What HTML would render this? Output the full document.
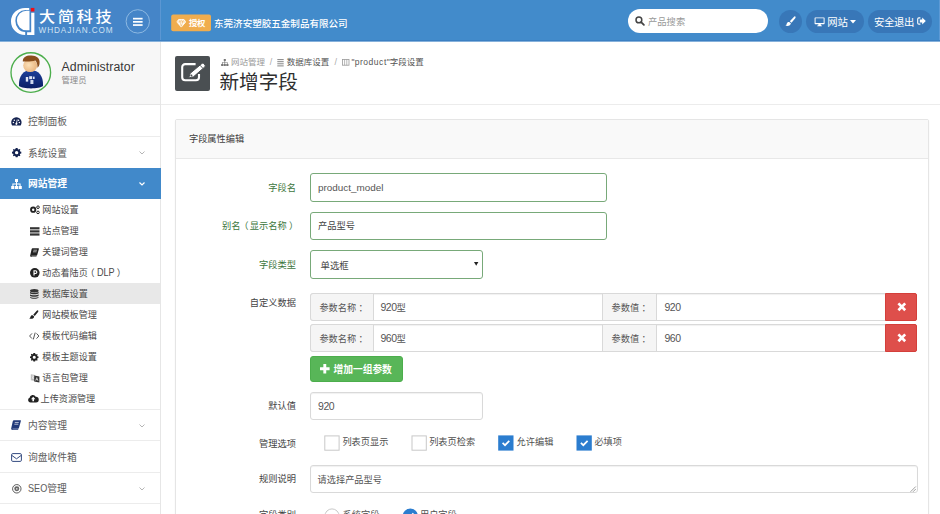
<!DOCTYPE html>
<html lang="zh-CN">
<head>
<meta charset="utf-8">
<title>新增字段</title>
<style>
*{box-sizing:border-box;margin:0;padding:0}
html,body{width:940px;height:514px;overflow:hidden;background:#fff}
body{position:relative;font-family:"Liberation Sans","Noto Sans CJK SC",sans-serif;font-size:9.6px;color:#444}
.a{position:absolute}
.t{position:absolute;line-height:1;white-space:nowrap}
svg{position:absolute;display:block;overflow:visible}
/* header */
#hd{left:0;top:0;width:940px;height:42px;background:#428bcb;border-bottom:1px solid #86b1db;box-shadow:inset 0 -1px 0 #3b7fc2}
#hdl{left:0;top:0;width:161px;height:40px;background:#4585c8;border-right:1px solid #5b97d3}
/* sidebar */
#sb{left:0;top:42px;width:161px;height:472px;background:#fff;border-right:1px solid #e6e6e6}
#user{left:0;top:42px;width:161px;height:63px;background:#f7f7f7;border-bottom:1px solid #e5e5e5;border-right:1px solid #e6e6e6}
.ln{position:absolute;left:0;width:160px;height:1px;background:#ececec}
.m1{font-size:9.75px;color:#5c5c5c;left:28px}
.m2{font-size:9.1px;color:#4a4a4a;left:42px}
/* main */
.lab{position:absolute;line-height:1;white-space:nowrap;font-size:9.25px;color:#444;text-align:right;width:120px;left:176px}
.g{color:#3c763d}
.inp{position:absolute;background:#fff;border:1px solid #d9d9d9;border-radius:3px;height:28px}
.ok{border-color:#78a979}
.ad{position:absolute;background:#f5f5f5;border:1px solid #d9d9d9;height:28px}
.pl{position:relative}
.cb{position:absolute;width:15px;height:15px;border:1px solid #ccc;background:#fff}
.cb.on{background:#2e7dd1;border-color:#2e7dd1}
</style>
</head>
<body>
<!-- HEADER -->
<div class="a" id="hd"></div>
<div class="a" id="hdl"></div>
<div class="a" style="left:939px;top:0;width:1px;height:40px;background:#5d9ad5"></div>
<!-- logo -->
<svg style="left:0;top:0" width="160" height="41" viewBox="0 0 160 41">
  <path d="M29.2,7.9 L25,7.9 A14,13.5 0 0 0 25,34.9 L25.2,34.9 L25.2,32 A10,11 0 0 1 25.5,10 L29.2,10 Z" fill="#fff"/>
  <path d="M29.5,10.7 L29.5,30.3 L26.5,30.3 A9.6,9.8 0 0 1 26.5,10.7 Z" fill="#fff"/>
  <path d="M31.2,12.8 H34.4 V34.9 H27.1 V32.2 H31.2 Z" fill="#fff"/>
  <rect x="30.8" y="7.9" width="3.6" height="3.6" fill="#f20d14"/>
  <circle cx="137.8" cy="21.4" r="11.7" fill="none" stroke="#8db9e2" stroke-width="1"/>
  <rect x="133" y="17.8" width="9.6" height="1.7" fill="#fff"/>
  <rect x="133" y="21" width="9.6" height="1.7" fill="#fff"/>
  <rect x="133" y="24.2" width="9.6" height="1.7" fill="#fff"/>
</svg>
<div class="t" id="lg1" style="left:38.6px;top:9.5px;font-size:14.7px;letter-spacing:2.4px;transform:scaleX(1.1);transform-origin:0 0;color:#fff;font-weight:500">大简科技</div>
<div class="t" id="lg2" style="left:38.6px;top:27.4px;font-size:8.2px;letter-spacing:0.9px;color:#cfe1f3">WHDAJIAN.COM</div>
<!-- badge -->
<svg id="badge" style="left:0;top:0" width="260" height="41" viewBox="0 0 260 41"><rect x="171.2" y="14.6" width="39.8" height="16.7" rx="2" fill="#f0ad4e"/></svg>
<svg style="left:176.4px;top:19.4px" width="10.6" height="8.6" viewBox="0 0 10 9"><path d="M2.2,0.5 H7.8 L9.6,3.1 L5,8.5 L0.4,3.1 Z" fill="#fff" stroke="#fff" stroke-width="0.9" stroke-linejoin="round"/><path d="M0.8,3.1 H9.2 M3.5,3.1 L5,7.6 L6.5,3.1 M2.6,0.9 L3.5,3.1 L5,0.9 L6.5,3.1 L7.4,0.9" fill="none" stroke="#f0ad4e" stroke-width="0.55" stroke-linejoin="round"/></svg>
<div class="t" id="bd1" style="left:189px;top:19.4px;font-size:8.4px;color:#fff;font-weight:bold;letter-spacing:-0.3px">授权</div>
<div class="t" id="co" style="left:214px;top:19px;font-size:9.55px;color:#fff;font-weight:500">东莞济安塑胶五金制品有限公司</div>
<!-- search -->
<div class="a" id="srch" style="left:628px;top:9px;width:140px;height:23.5px;background:#fff;border-radius:12px"></div>
<svg style="left:635px;top:15.5px" width="10" height="10" viewBox="0 0 10 10"><circle cx="3.9" cy="3.9" r="2.9" fill="none" stroke="#444" stroke-width="1.5"/><path d="M6.1,6.1 L8.9,8.9" stroke="#444" stroke-width="1.8" stroke-linecap="round"/></svg>
<div class="t" id="ph" style="left:648px;top:17.5px;font-size:9.3px;color:#999">产品搜索</div>
<!-- right buttons -->
<div class="a" style="left:779px;top:9.8px;width:23.4px;height:23.4px;border-radius:12px;background:#3877b8"></div>
<svg style="left:785px;top:16.2px" width="10.9" height="10.9" viewBox="0 0 12 12"><path d="M11.3,0.5 C11.9,1 11.8,1.7 11.3,2.4 L7.2,7.4 L5.3,5.9 L9.7,1 C10.2,0.4 10.8,0.1 11.3,0.5 Z M4.6,6.6 L6.5,8.1 C6.3,10.3 3.6,11.9 0.3,10.6 C1.6,10 1.7,9.2 2,8.2 C2.4,6.9 3.6,6.3 4.6,6.6 Z" fill="#fff"/></svg>
<div class="a" style="left:806px;top:9.8px;width:58px;height:22.8px;border-radius:12px;background:#3877b8"></div>
<svg style="left:813.5px;top:16.6px" width="11.2" height="9.6" viewBox="0 0 11 10"><path d="M0.9,0.4 H10.1 A0.6,0.6 0 0 1 10.7,1 V6.9 A0.6,0.6 0 0 1 10.1,7.5 H0.9 A0.6,0.6 0 0 1 0.3,6.9 V1 A0.6,0.6 0 0 1 0.9,0.4 Z M1.3,1.4 V6.3 H9.7 V1.4 Z M4.3,7.5 H6.7 L7,8.8 H8 V9.6 H3 V8.8 H4 Z" fill="#fff" fill-rule="evenodd"/></svg>
<div class="t" id="wz" style="left:827.3px;top:17.5px;font-size:10.4px;color:#fff;letter-spacing:-0.3px">网站</div>
<svg style="left:849.5px;top:19.5px" width="6" height="4" viewBox="0 0 6 4"><path d="M0,0 H6 L3,3.4 Z" fill="#fff"/></svg>
<div class="a" style="left:867.7px;top:9.8px;width:64.6px;height:22.8px;border-radius:12px;background:#3877b8"></div>
<div class="t" id="tc" style="left:874px;top:17.7px;font-size:10.4px;color:#fff;letter-spacing:-0.4px">安全退出</div>
<svg style="left:916.5px;top:16.8px" width="9" height="8" viewBox="0 0 9 8"><path d="M3.4,0.9 H1.9 A1.2,1.2 0 0 0 0.7,2.1 V5.9 A1.2,1.2 0 0 0 1.9,7.1 H3.4" fill="none" stroke="#fff" stroke-width="1.1"/><path d="M5.2,0.5 L8.8,4 L5.2,7.5 V5.4 H2.8 V2.6 H5.2 Z" fill="#fff"/></svg>

<!-- SIDEBAR -->
<div class="a" id="sb"></div>
<div class="a" id="user"></div>
<!-- avatar -->
<svg style="left:10px;top:52px" width="42" height="42" viewBox="0 0 42 42">
  <defs><clipPath id="avc"><circle cx="20.8" cy="20.5" r="19.3"/></clipPath>
  <linearGradient id="bodyg" x1="0" y1="0" x2="0" y2="1"><stop offset="0" stop-color="#1c3f9a"/><stop offset="1" stop-color="#0c1f66"/></linearGradient>
  <radialGradient id="skin" cx="0.4" cy="0.45" r="0.6"><stop offset="0" stop-color="#fbe0b8"/><stop offset="1" stop-color="#e9b57f"/></radialGradient></defs>
  <circle cx="20.8" cy="20.5" r="19.8" fill="#f8f8f8" stroke="#4cae4c" stroke-width="1.35"/>
  <g clip-path="url(#avc)">
    <path d="M9,34 C8.5,24 13,18.2 21,18.2 C29,18.2 33.5,24 33,34 C29,37.2 13,37.2 9,34 Z" fill="url(#bodyg)"/>
    <ellipse cx="20.2" cy="13.6" rx="7" ry="6.4" fill="url(#skin)"/>
    <path d="M12.8,9.4 C12.6,5 17,3.2 21.5,3.6 C26.5,3.8 30,6.4 29.6,11 C29.4,13.6 28.6,15 27.4,15.8 C27.6,13 27,10.6 25.4,8.6 C22,9.6 17,9.8 12.8,9.4 Z" fill="#8a4f1d"/>
    <rect x="15.8" y="25" width="2.4" height="4.6" fill="#dfe6f5"/><rect x="19.2" y="24.2" width="3" height="3" fill="#dfe6f5"/><rect x="20.4" y="28" width="3" height="4" fill="#cfd8ee"/><rect x="23" y="24.6" width="1.6" height="2.4" fill="#dfe6f5"/>
  </g>
</svg>
<div class="t" id="un" style="left:61.5px;top:60.8px;font-size:12.3px;color:#383838;letter-spacing:0.07px">Administrator</div>
<div class="t" id="ur" style="left:61.5px;top:75.5px;font-size:8.4px;color:#888">管理员</div>
<!-- menu -->
<div class="ln" style="top:136px"></div>
<div class="a" id="act" style="left:0;top:168px;width:161px;height:30.5px;background:#4189ca"></div>
<div class="a" id="sub" style="left:0;top:283px;width:160px;height:21px;background:#e8e8e8"></div>
<div class="ln" style="top:409px"></div>
<div class="ln" style="top:440px"></div>
<div class="ln" style="top:472px"></div>
<div class="ln" style="top:503px"></div>
<svg style="left:10.8px;top:116.7px" width="10.8" height="9.4" viewBox="0 0 11.5 10"><path d="M5.75,0.3 A5.5,5.5 0 0 1 10.6,8.4 C10.4,8.8 10.1,9 9.7,9 H1.8 C1.4,9 1.1,8.8 0.9,8.4 A5.5,5.5 0 0 1 5.75,0.3 Z" fill="#14224f"/><circle cx="2.6" cy="5.9" r="0.8" fill="#fff"/><circle cx="3.5" cy="3.4" r="0.8" fill="#fff"/><circle cx="8" cy="3.4" r="0.8" fill="#fff"/><circle cx="8.9" cy="5.9" r="0.8" fill="#fff"/><path d="M5.2,7.6 L6.3,2.4 L6.9,2.6 L6.4,7.8 Z" fill="#fff"/><circle cx="5.75" cy="7.3" r="1.1" fill="#fff"/></svg>
<div class="t m1" id="m_kz" style="top:116.8px">控制面板</div>
<svg style="left:11.5px;top:148.2px" width="9.3" height="9.3" viewBox="0 0 10 10"><path d="M5,0 L6,0.1 L6.3,1.3 L7.2,1.7 L8.3,1.1 L9,1.8 L8.4,2.9 L8.8,3.8 L10,4.1 V5.9 L8.8,6.2 L8.4,7.1 L9,8.2 L8.2,9 L7.2,8.4 L6.3,8.8 L6,10 H4 L3.7,8.8 L2.8,8.4 L1.8,9 L1,8.2 L1.6,7.1 L1.2,6.2 L0,5.9 V4.1 L1.2,3.8 L1.6,2.9 L1,1.8 L1.8,1 L2.8,1.6 L3.7,1.2 L4,0 Z M5,3.2 A1.8,1.8 0 1 0 5,6.8 A1.8,1.8 0 1 0 5,3.2 Z" fill="#14224f" fill-rule="evenodd"/></svg>
<div class="t m1" id="m_xt" style="top:148.8px">系统设置</div>
<svg style="left:138.5px;top:151.0px" width="6" height="4" viewBox="0 0 6 4"><path d="M0.5,0.5 L3,3 L5.5,0.5" fill="none" stroke="#b5b5b5" stroke-width="1"/></svg>
<svg style="left:11px;top:178.5px" width="11" height="10" viewBox="0 0 11 10"><path d="M4,0 H7 V3 H6 V4.5 H9.6 V7 H10.8 V10 H7.6 V7 H8.6 V5.5 H6 V7 H7 V10 H4 V7 H5 V5.5 H2.4 V7 H3.4 V10 H0.2 V7 H1.4 V4.5 H5 V3 H4 Z" fill="#fff"/></svg>
<div class="t m1" id="m_wz" style="top:178.8px;color:#fff;font-weight:bold;letter-spacing:0">网站管理</div>
<svg style="left:139px;top:181.5px" width="6" height="4" viewBox="0 0 6 4"><path d="M0.5,0.5 L3,3 L5.5,0.5" fill="none" stroke="#fff" stroke-width="1.2"/></svg>
<svg style="left:29.5px;top:205px" width="10" height="10" viewBox="0 0 10 10"><path d="M3.2,1.6 A3.1,3.1 0 1 0 3.2,7.8 A3.1,3.1 0 1 0 3.2,1.6 Z M3.2,3.5 A1.2,1.2 0 1 1 3.2,5.9 A1.2,1.2 0 1 1 3.2,3.5 Z" fill="#222" fill-rule="evenodd"/><circle cx="8" cy="2.2" r="1.3" fill="none" stroke="#222" stroke-width="1"/><circle cx="8" cy="7.4" r="1.3" fill="none" stroke="#222" stroke-width="1"/></svg>
<div class="t m2" id="s0" style="left:42.3px;top:206.4px">网站设置</div>
<svg style="left:29.5px;top:226.5px" width="9.5" height="9" viewBox="0 0 9.5 9"><rect x="0" y="0.2" width="9.5" height="2.2" fill="#333"/><rect x="0" y="3.3" width="9.5" height="2.2" fill="#333"/><rect x="0" y="6.4" width="9.5" height="2.2" fill="#333"/></svg>
<div class="t m2" id="s1" style="left:42.3px;top:227.4px">站点管理</div>
<svg style="left:30px;top:247.5px" width="9" height="9" viewBox="0 0 9 9"><path d="M2.6,0.2 H8.4 C8.9,0.2 9,0.6 8.9,1 L7.2,7 C7.1,7.5 6.8,7.8 6.3,7.8 H1.8 C1.2,7.8 1.2,8.4 1.8,8.4 H6.6 L6.4,9 H1.4 C0.2,9 -0.1,8 0.3,7 L1.6,1.2 C1.8,0.6 2.1,0.2 2.6,0.2 Z" fill="#222"/><path d="M3.4,2.2 H7 M3,3.8 H6.6" stroke="#fff" stroke-width="0.6"/></svg>
<div class="t m2" id="s2" style="left:42.3px;top:248.4px">关键词管理</div>
<svg style="left:29.5px;top:268px" width="9.6" height="9.6" viewBox="0 0 10 10"><circle cx="5" cy="5" r="5" fill="#222"/><path d="M3.6,2.4 H5.8 A1.9,1.9 0 0 1 5.8,6.2 H4.8 V7.8 H3.6 Z M4.8,3.5 V5.1 H5.7 A0.8,0.8 0 0 0 5.7,3.5 Z" fill="#fff" fill-rule="evenodd"/></svg>
<div class="t m2" id="s3" style="left:42.3px;top:268.2px">动态着陆页<span class="pl" style="left:-2.3px">（</span><span style="display:inline-block;font-size:10.1px;transform:scaleX(.9);transform-origin:0 50%;margin-right:-1.9px">DLP</span><span class="pl" style="left:2px">）</span></div>
<svg style="left:30px;top:289px" width="8.6" height="10" viewBox="0 0 8.6 10"><ellipse cx="4.3" cy="1.7" rx="4.3" ry="1.7" fill="#333"/><path d="M0,2.7 C1,4 7.6,4 8.6,2.7 V4.3 C7.6,5.7 1,5.7 0,4.3 Z M0,5.2 C1,6.5 7.6,6.5 8.6,5.2 V6.8 C7.6,8.2 1,8.2 0,6.8 Z M0,7.7 C1,9 7.6,9 8.6,7.7 V8.6 C7.6,10.3 1,10.3 0,8.6 Z" fill="#333"/></svg>
<div class="t m2" id="s4" style="left:42.3px;top:290.4px">数据库设置</div>
<svg style="left:28.9px;top:310.2px" width="9.6" height="9.6" viewBox="0 0 12 12"><path d="M11.3,0.5 C11.9,1 11.8,1.7 11.3,2.4 L7.2,7.4 L5.3,5.9 L9.7,1 C10.2,0.4 10.8,0.1 11.3,0.5 Z M4.6,6.6 L6.5,8.1 C6.3,10.3 3.6,11.9 0.3,10.6 C1.6,10 1.7,9.2 2,8.2 C2.4,6.9 3.6,6.3 4.6,6.6 Z" fill="#222"/></svg>
<div class="t m2" id="s5" style="left:42.3px;top:311.4px">网站模板管理</div>
<svg style="left:29px;top:332px" width="10.5" height="8" viewBox="0 0 10.5 8"><path d="M3,1.4 L0.6,4 L3,6.6 M7.5,1.4 L9.9,4 L7.5,6.6 M6.2,0.6 L4.3,7.4" fill="none" stroke="#444" stroke-width="0.9"/></svg>
<div class="t m2" id="s6" style="left:42.3px;top:332.4px">模板代码编辑</div>
<svg style="left:30.1px;top:352.9px" width="8.5" height="8.5" viewBox="0 0 10 10"><path d="M5,0 L6,0.1 L6.3,1.3 L7.2,1.7 L8.3,1.1 L9,1.8 L8.4,2.9 L8.8,3.8 L10,4.1 V5.9 L8.8,6.2 L8.4,7.1 L9,8.2 L8.2,9 L7.2,8.4 L6.3,8.8 L6,10 H4 L3.7,8.8 L2.8,8.4 L1.8,9 L1,8.2 L1.6,7.1 L1.2,6.2 L0,5.9 V4.1 L1.2,3.8 L1.6,2.9 L1,1.8 L1.8,1 L2.8,1.6 L3.7,1.2 L4,0 Z M5,3.2 A1.8,1.8 0 1 0 5,6.8 A1.8,1.8 0 1 0 5,3.2 Z" fill="#222" fill-rule="evenodd"/></svg>
<div class="t m2" id="s7" style="left:42.3px;top:353.4px">模板主题设置</div>
<svg style="left:29.5px;top:373px" width="10" height="10" viewBox="0 0 10 10"><path d="M0.8,1.2 L5.2,2 V8 L0.8,7.2 Z" fill="#bbb"/><path d="M4.2,2.6 L9.4,3.4 V9.4 L4.2,8.6 Z" fill="#333"/><path d="M5.6,7.6 L6.8,4.6 L8,7.9 M6,6.6 H7.6" stroke="#fff" stroke-width="0.6" fill="none"/><path d="M1.6,3.2 H4 M2.8,2.6 V3.2 M3.8,3.2 C3.4,4.6 2.6,5.6 1.6,6 M2.2,4 C2.6,5 3.2,5.4 4,5.8" stroke="#fff" stroke-width="0.5" fill="none"/></svg>
<div class="t m2" id="s8" style="left:42.3px;top:374.4px">语言包管理</div>
<svg style="left:28px;top:394px" width="10.5" height="9" viewBox="0 0 10.5 9"><path d="M2.6,8.6 A2.5,2.5 0 0 1 1.6,3.8 A3.2,3.2 0 0 1 7.7,2.8 A2.9,2.9 0 0 1 8,8.6 Z" fill="#222"/><path d="M5.2,2.8 L7.4,5.2 H6 V7.2 H4.4 V5.2 H3 Z" fill="#fff"/></svg>
<div class="t m2" id="s9" style="left:40.6px;top:395.0px">上传资源管理</div>
<svg style="left:11px;top:420px" width="10" height="10" viewBox="0 0 9 9"><path d="M2.6,0.2 H8.4 C8.9,0.2 9,0.6 8.9,1 L7.2,7 C7.1,7.5 6.8,7.8 6.3,7.8 H1.8 C1.2,7.8 1.2,8.4 1.8,8.4 H6.6 L6.4,9 H1.4 C0.2,9 -0.1,8 0.3,7 L1.6,1.2 C1.8,0.6 2.1,0.2 2.6,0.2 Z" fill="#223a7a"/><path d="M3.4,2.2 H7 M3,3.8 H6.6" stroke="#fff" stroke-width="0.6"/></svg>
<div class="t m1" id="m_nr" style="top:421.1px">内容管理</div>
<svg style="left:138.5px;top:423.5px" width="6" height="4" viewBox="0 0 6 4"><path d="M0.5,0.5 L3,3 L5.5,0.5" fill="none" stroke="#b5b5b5" stroke-width="1"/></svg>
<svg style="left:10.5px;top:452.5px" width="11" height="9" viewBox="0 0 11 9"><rect x="0.6" y="0.6" width="9.8" height="7.8" rx="1.2" fill="none" stroke="#334a80" stroke-width="1"/><path d="M0.8,2.4 L5.5,5.8 L10.2,2.4" fill="none" stroke="#334a80" stroke-width="1"/></svg>
<div class="t m1" id="m_xp" style="top:453.1px">询盘收件箱</div>
<svg style="left:11.5px;top:483.5px" width="9.6" height="9.6" viewBox="0 0 10 10"><circle cx="5" cy="5" r="4.4" fill="none" stroke="#555" stroke-width="1"/><circle cx="5" cy="5" r="2.6" fill="#666"/><circle cx="5" cy="5" r="0.9" fill="#ddd"/></svg>
<div class="t m1" id="m_seo" style="top:483.3px"><span style="display:inline-block;font-size:10.6px;transform:scaleX(.86);transform-origin:0 50%;margin-right:-3.1px">SEO</span>管理</div>
<svg style="left:138.5px;top:487.0px" width="6" height="4" viewBox="0 0 6 4"><path d="M0.5,0.5 L3,3 L5.5,0.5" fill="none" stroke="#b5b5b5" stroke-width="1"/></svg>

<!-- MAIN -->
<div class="a" id="main"></div>
<!-- page header -->
<div class="a" id="pico" style="left:174.8px;top:55.8px;width:34.8px;height:34.8px;background:#4a4f52;border-radius:2px"></div>
<svg style="left:180px;top:62px" width="26" height="21" viewBox="0 0 26 21"><path d="M15.6,2.1 H5.2 A3,3 0 0 0 2.2,5.1 V15.2 A3,3 0 0 0 5.2,18.2 H16 A3,3 0 0 0 19,15.2 V12" fill="none" stroke="#fff" stroke-width="2.1"/><path d="M21.9,1.5 Q22.9,0.6 23.8,1.6 L25,3 Q25.8,4 24.8,4.9 L13.5,14.8 L8.7,15.9 L10.2,11.3 Z" fill="#fff" stroke="#4a4f52" stroke-width="1"/><path d="M20,3.2 L23,6.5" stroke="#4a4f52" stroke-width="0.9"/><circle cx="11.4" cy="13.5" r="1" fill="#4a4f52"/></svg>
<svg style="left:221px;top:58.5px" width="7.6" height="7" viewBox="0 0 11 10"><path d="M4,0 H7 V3 H6 V4.5 H9.6 V7 H10.8 V10 H7.6 V7 H8.6 V5.5 H6 V7 H7 V10 H4 V7 H5 V5.5 H2.4 V7 H3.4 V10 H0.2 V7 H1.4 V4.5 H5 V3 H4 Z" fill="#777"/></svg>
<div class="t" id="b1" style="left:231px;top:58.3px;font-size:8.5px;color:#999">网站管理</div>
<div class="t" id="b2" style="left:269.8px;top:58.2px;font-size:9px;color:#aaa">/</div>
<svg style="left:277px;top:58.5px" width="7" height="7.4" viewBox="0 0 7 7.4"><path d="M0.3,0.6 H6.7 M0.3,2.7 H6.7 M0.3,4.8 H6.7 M0.3,6.9 H6.7" stroke="#777" stroke-width="0.9"/></svg>
<div class="t" id="b3" style="left:286.8px;top:58.3px;font-size:8.5px;color:#555">数据库设置</div>
<div class="t" id="b4" style="left:334.4px;top:58.2px;font-size:9px;color:#aaa">/</div>
<svg style="left:342px;top:58.8px" width="7.4" height="6.6" viewBox="0 0 7.4 6.6"><rect x="0.4" y="0.4" width="6.6" height="5.8" fill="none" stroke="#999" stroke-width="0.8"/><path d="M2.6,0.4 V6.2 M4.8,0.4 V6.2" stroke="#999" stroke-width="0.7"/></svg>
<div class="t" id="b5" style="left:351.6px;top:58.3px;font-size:8.5px;color:#555">"<span style="letter-spacing:0.55px">product</span>"字段设置</div>
<div class="t" id="ttl" style="left:219.5px;top:72.6px;font-size:19.6px;color:#2f2f2f">新增字段</div>
<div class="a" style="left:161px;top:103.5px;width:779px;height:1px;background:#ececec"></div>
<!-- panel -->
<div class="a" id="panel" style="left:174.8px;top:119.3px;width:754px;height:420px;border:1px solid #e5e5e5;border-radius:2px;background:#fff;box-shadow:0 1px 2px rgba(0,0,0,.05)"></div>
<div class="a" id="phd" style="left:175.8px;top:120.3px;width:752px;height:39px;background:#f9f9f9;border-bottom:1px solid #e8e8e8"></div>
<div class="t" id="pt" style="left:189px;top:135.1px;font-size:9.2px;color:#404040">字段属性编辑</div>
<!-- row 1 -->
<div class="lab g" id="l1" style="top:183.7px">字段名</div>
<div class="inp ok" id="i1" style="left:309.8px;top:173px;width:297px;height:29px"></div>
<div class="t" id="v1" style="left:318px;top:182.6px;font-size:9.9px;color:#555">product_model</div>
<!-- row 2 -->
<div class="lab g" id="l2" style="top:221.8px">别名<span class="pl" style="left:-1.3px">（</span>显示名称<span class="pl" style="left:2.3px">）</span></div>
<div class="inp ok" id="i2" style="left:309.8px;top:211.8px;width:297px;height:28px"></div>
<div class="t" id="v2" style="left:318px;top:221.8px;font-size:9.25px;color:#444">产品型号</div>
<!-- row 3 -->
<div class="lab g" id="l3" style="top:260.7px">字段类型</div>
<div class="inp ok" id="i3" style="left:309.8px;top:250.3px;width:173.2px;height:28.4px"></div>
<div class="t" id="v3" style="left:320.5px;top:260.6px;font-size:9.4px;color:#444">单选框</div>
<svg style="left:473.6px;top:262px" width="4.4" height="4" viewBox="0 0 4.4 4"><path d="M0,0 H4.4 L2.2,3.8 Z" fill="#222"/></svg>
<!-- row 4 custom data -->
<div class="lab" id="l4" style="top:299.2px">自定义数据</div>
<div class="inp" style="left:309.8px;top:293px;width:576px;height:28px;border-radius:3px 0 0 3px;box-shadow:inset 0 1px 1px rgba(0,0,0,.06)"></div>
<div class="ad" style="left:309.8px;top:293px;width:64.4px;border-radius:3px 0 0 3px"></div>
<div class="t" id="a01" style="left:319.4px;top:303.6px;font-size:9.2px;color:#555">参数名称<span class="pl" style="left:2.3px">：</span></div>
<div class="t" id="a02" style="left:380.4px;top:302.0px;font-size:10.5px;letter-spacing:-0.45px;color:#555">920<span style="font-size:9.3px;letter-spacing:0">型</span></div>
<div class="ad" style="left:602.2px;top:293px;width:54.8px"></div>
<div class="t" id="a03" style="left:611.6px;top:303.6px;font-size:9.2px;color:#555">参数值<span class="pl" style="left:2.3px">：</span></div>
<div class="t" id="a04" style="left:664.4px;top:302.0px;font-size:10.5px;letter-spacing:-0.45px;color:#555">920</div>
<div class="a" id="del0" style="left:885.2px;top:293px;width:32px;height:28px;background:#de4f4b;border:1px solid #d43f3a;border-radius:0 2px 2px 0"></div>
<svg style="left:896.7px;top:301.7px" width="9.6" height="9.6" viewBox="0 0 9.6 9.6"><path d="M1.4,1.4 L8.2,8.2 M8.2,1.4 L1.4,8.2" stroke="#fff" stroke-width="2.7"/></svg>
<div class="inp" style="left:309.8px;top:324.2px;width:576px;height:28px;border-radius:3px 0 0 3px;box-shadow:inset 0 1px 1px rgba(0,0,0,.06)"></div>
<div class="ad" style="left:309.8px;top:324.2px;width:64.4px;border-radius:3px 0 0 3px"></div>
<div class="t" id="a11" style="left:319.4px;top:334.8px;font-size:9.2px;color:#555">参数名称<span class="pl" style="left:2.3px">：</span></div>
<div class="t" id="a12" style="left:380.4px;top:333.2px;font-size:10.5px;letter-spacing:-0.45px;color:#555">960<span style="font-size:9.3px;letter-spacing:0">型</span></div>
<div class="ad" style="left:602.2px;top:324.2px;width:54.8px"></div>
<div class="t" id="a13" style="left:611.6px;top:334.8px;font-size:9.2px;color:#555">参数值<span class="pl" style="left:2.3px">：</span></div>
<div class="t" id="a14" style="left:664.4px;top:333.2px;font-size:10.5px;letter-spacing:-0.45px;color:#555">960</div>
<div class="a" id="del1" style="left:885.2px;top:324.2px;width:32px;height:28px;background:#de4f4b;border:1px solid #d43f3a;border-radius:0 2px 2px 0"></div>
<svg style="left:896.7px;top:332.9px" width="9.6" height="9.6" viewBox="0 0 9.6 9.6"><path d="M1.4,1.4 L8.2,8.2 M8.2,1.4 L1.4,8.2" stroke="#fff" stroke-width="2.7"/></svg>
<div class="a" id="addb" style="left:309.8px;top:356.2px;width:93px;height:25.4px;background:#58b658;border:1px solid #4cae4c;border-radius:3px"></div>
<svg style="left:320.3px;top:364.3px" width="9.6" height="9.6" viewBox="0 0 9.6 9.6"><path d="M4.8,0 V9.6 M0,4.8 H9.6" stroke="#fff" stroke-width="2.9"/></svg>
<div class="t" id="addt" style="left:333.6px;top:365.1px;font-size:9.8px;color:#fff;font-weight:bold;letter-spacing:-0.1px">增加一组参数</div>
<!-- default -->
<div class="lab" id="l5" style="top:402.1px">默认值</div>
<div class="inp" id="i5" style="left:309.8px;top:392.3px;width:173px;height:27.8px;box-shadow:inset 0 1px 1px rgba(0,0,0,.06)"></div>
<div class="t" id="v5" style="left:318px;top:400.6px;font-size:10.5px;letter-spacing:-0.45px;color:#555">920</div>
<!-- options -->
<div class="lab" id="l6" style="top:440.2px">管理选项</div>
<div class="t" id="c1" style="left:342.4px;top:438.4px;font-size:9.2px;color:#505050">列表页显示</div>
<div class="t" id="c2" style="left:429.2px;top:438.4px;font-size:9.2px;color:#505050">列表页检索</div>
<div class="t" id="c3" style="left:516.6px;top:438.4px;font-size:9.2px;color:#505050">允许编辑</div>
<div class="t" id="c4" style="left:594.4px;top:438.4px;font-size:9.2px;color:#505050">必填项</div>
<svg id="ctl" style="left:0;top:0" width="940" height="514" viewBox="0 0 940 514">
<rect x="324.8" y="435.9" width="14.3" height="14.3" fill="#fff" stroke="#c8c8c8" stroke-width="1"/>
<rect x="412" y="435.9" width="14.3" height="14.3" fill="#fff" stroke="#c8c8c8" stroke-width="1"/>
<rect x="498.2" y="435.4" width="15.3" height="15.2" fill="#2b7dcf"/>
<path d="M502.6,442.9 L505,445.2 L509.3,440.8" fill="none" stroke="#fff" stroke-width="1.7"/>
<rect x="576.5" y="435.4" width="15.3" height="15.2" fill="#2b7dcf"/>
<path d="M580.9,442.9 L583.3,445.2 L587.6,440.8" fill="none" stroke="#fff" stroke-width="1.7"/>
<circle cx="332" cy="516" r="7.1" fill="#fff" stroke="#c8c8c8" stroke-width="1"/>
<circle cx="410.3" cy="516.1" r="7.6" fill="#2b7dcf"/>
<path d="M406.6,515.6 L409,518 L413.4,513.4" fill="none" stroke="#fff" stroke-width="1.7"/>
</svg>
<!-- rule -->
<div class="lab" id="l7" style="top:475.2px">规则说明</div>
<div class="inp" id="i7" style="left:309.8px;top:465px;width:608.2px;height:28px;box-shadow:inset 0 1px 1px rgba(0,0,0,.06)"></div>
<div class="t" id="v7" style="left:317.6px;top:475.6px;font-size:9.2px;color:#555">请选择产品型号</div>
<svg style="left:910.4px;top:485.8px" width="6" height="6" viewBox="0 0 6 6"><path d="M0.5,5.8 L5.8,0.5 M3,5.8 L5.8,3" stroke="#777" stroke-width="0.7"/></svg>
<!-- category -->
<div class="lab" id="l8" style="top:510.6px">字段类别</div>
<div class="t" id="r1" style="left:342.6px;top:510.6px;font-size:9.2px;color:#505050">系统字段</div>
<div class="t" id="r2" style="left:420px;top:510.6px;font-size:9.2px;color:#505050">用户字段</div>
</body>
</html>
